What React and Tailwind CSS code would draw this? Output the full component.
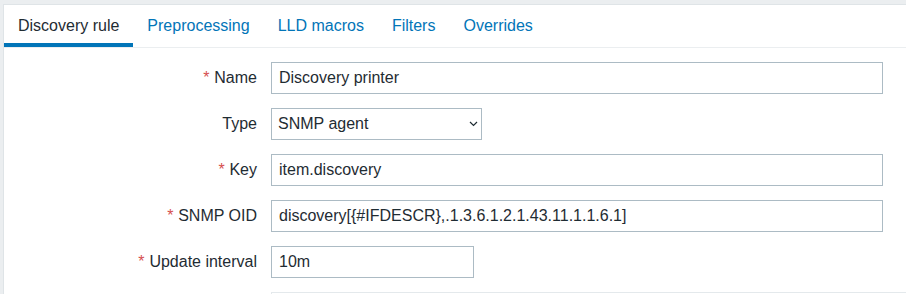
import { useState } from 'react';

const tabs = ['Discovery rule', 'Preprocessing', 'LLD macros', 'Filters', 'Overrides'];

function Label({ required, children }) {
  return (
    <label className="flex h-[32px] items-center justify-end text-right">
      {required && <span className="mr-[4.8px] text-[#d64e4e]">*</span>}
      {children}
    </label>
  );
}

function TextField({ value, width }) {
  return (
    <input
      readOnly
      defaultValue={value}
      className={`h-[32px] border border-[#acbbc4] bg-white px-[7px] text-[#1f2c33] outline-none ${width}`}
    />
  );
}

export default function App() {
  const [active] = useState(0);

  return (
    <div className="h-[294px] overflow-hidden bg-[#ebeef0] pl-[3px] pt-[4px] text-[16px] text-[#1f2c33]" style={{ fontFamily: '"Liberation Sans", Arial, sans-serif' }}>
      <div className="h-full border-l border-t border-[#dfe4e7] bg-white">
        <ul className="flex border-b border-[#ebeef0]">
          {tabs.map((tab, i) => (
            <li
              key={tab}
              className={`border-b-4 px-[14px] pb-[8px] pt-[12px] leading-[18px] ${i === active ? 'border-[#0275b8] text-[#1f2c33]' : 'border-transparent text-[#0275b8]'}`}
            >
              {tab}
            </li>
          ))}
        </ul>

        <div className="grid grid-cols-[253px_1fr] gap-x-[14px] gap-y-[14px] pt-[14px]">
          <Label required>Name</Label>
          <TextField value="Discovery printer" width="w-[612px]" />

          <Label>Type</Label>
          <div className="flex h-[32px] w-[211px] items-center justify-between border border-[#acbbc4] pl-[6px] pr-[3px]">
            <span>SNMP agent</span>
            <svg width="9" height="6" viewBox="0 0 9 6" fill="none" stroke="#1f2c33" strokeWidth="1.2">
              <path d="M1 1l3.5 3.5L8 1" />
            </svg>
          </div>

          <Label required>Key</Label>
          <TextField value="item.discovery" width="w-[612px]" />

          <Label required>SNMP OID</Label>
          <TextField value="discovery[{#IFDESCR},.1.3.6.1.2.1.43.11.1.1.6.1]" width="w-[612px]" />

          <Label required>Update interval</Label>
          <TextField value="10m" width="w-[203px]" />

          <div className="h-[32px]" />
          <div className="h-[32px] w-[660px] border border-[#e4e9ec]" />
        </div>
      </div>
    </div>
  );
}
